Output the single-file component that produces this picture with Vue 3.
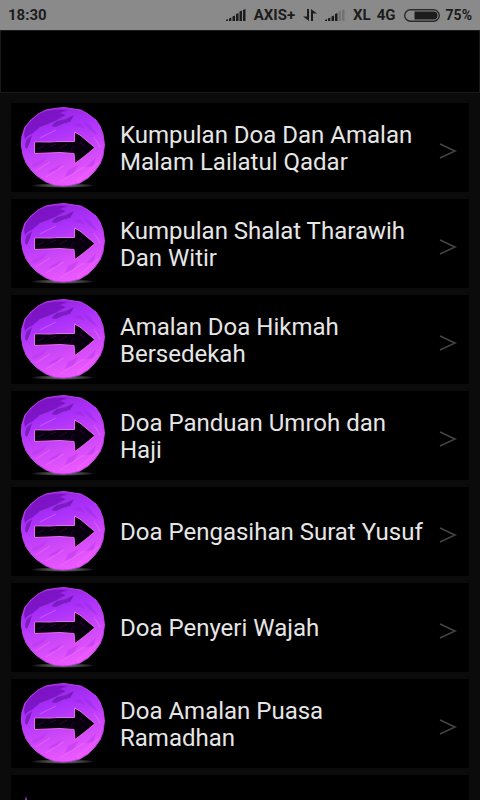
<script setup>
const items = [
  'Kumpulan Doa Dan Amalan Malam Lailatul Qadar',
  'Kumpulan Shalat Tharawih Dan Witir',
  'Amalan Doa Hikmah Bersedekah',
  'Doa Panduan Umroh dan Haji',
  'Doa Pengasihan Surat Yusuf',
  'Doa Penyeri Wajah',
  'Doa Amalan Puasa Ramadhan',
]
</script>

<template>
  <div class="app">
    <div class="status">
      <span class="clock">18:30</span>
      <svg class="signal" viewBox="0 0 20 12" aria-hidden="true">
        <path d="M0 12V11L2 10V12ZM3 12V9.500L5.300 8.500V12ZM6.500 12V7.500L9 6.500V12ZM10 12V5L12.500 4V12ZM13.500 12V2.500L16 1.500V12ZM17 12V1L19.500 0V12Z" />
      </svg>
      <span class="carrier first">AXIS+</span>
      <svg class="data" viewBox="0 0 14 12" aria-hidden="true">
        <path d="M4 0H6V12L0 7.500H4ZM8 12V0L14 4.500H10V12Z" />
      </svg>
      <svg class="signal" viewBox="0 0 20 12" aria-hidden="true">
        <path d="M0 12V11L2 10V12ZM3 12V9.500L5.300 8.500V12ZM6.500 12V7.500L9 6.500V12ZM10 12V5L12.500 4V12Z" />
        <path class="dim" d="M13.500 12V2.500L16 1.500V12ZM17 12V1L19.500 0V12Z" />
      </svg>
      <span class="carrier second">XL</span>
      <span class="carrier network">4G</span>
      <svg class="battery" viewBox="0 0 36 13" aria-hidden="true">
        <rect class="shell" x="0.700" y="0.700" width="34.600" height="11.600" rx="5.800" />
        <path d="M10.500 2.500H29.500A4 4 0 0 1 29.500 10.500H10.500Z" />
      </svg>
      <span class="percent">75%</span>
    </div>

    <header class="bar"></header>

    <svg class="defs" aria-hidden="true">
      <defs>
        <linearGradient id="ball" x1="0.300" y1="0" x2="0.650" y2="1">
          <stop offset="0" stop-color="#9423dc" />
          <stop offset="0.300" stop-color="#aa30fa" />
          <stop offset="0.620" stop-color="#cb46f8" />
          <stop offset="1" stop-color="#f05cff" />
        </linearGradient>
        <radialGradient id="shade">
          <stop offset="0" stop-color="#777" />
          <stop offset="0.600" stop-color="#3c3c3c" />
          <stop offset="1" stop-color="#000" />
        </radialGradient>
        <filter id="brush" x="-10%" y="-10%" width="120%" height="120%">
          <feGaussianBlur stdDeviation="0.700" />
        </filter>
        <symbol id="arrow-ball" viewBox="0 0 88 86">
          <ellipse cx="43" cy="80.500" rx="33" ry="2.500" fill="url(#shade)" />
          <path d="M44 2.500L54 4L61 5L68 9L76 15L80 21L83 29L84.500 40L83 51L80 59L75 66L68 73L60 78L52 80L43 81L34 80L26 77L17 71L11 65L6 58L3 50L1.300 40L2 31L5 22L11 15L18 9L26 5L34 3.500Z" fill="url(#ball)" stroke="#c044ee" stroke-width="0.900" />
          <g filter="url(#brush)">
            <path d="M12 15L19 9L26 6L36 4.500L48 5L40 8L46 10L35 16L28 19L20 22L13 28L8 31L5 34L4 29L6 22Z" fill="#7414bd" opacity="0.800" />
            <path d="M31 21L37 16L46 14L54 10L50 17L42 19L36 22ZM5 42L6 35L12 30L10 37L7 44Z" fill="#7016b4" opacity="0.800" />
            <path d="M62 15L70 20L78 30L69 25ZM52 20L60 18L66 24Z" fill="#9227dc" opacity="0.400" />
            <path d="M11 60L28 51L23 58L14 63ZM26 68L42 58L36 66ZM48 65L58 60L54 68L45 72ZM66 62L76 52L73 61Z" fill="#b338ef" opacity="0.450" />
            <path d="M16 66L30 57M26 72L44 61M40 77L64 62M57 76L78 58M20 33L36 25M74 32L80 42" stroke="#f372ff" stroke-width="1.200" opacity="0.450" fill="none" />
          </g>
          <path d="M14.500 36.800L30 37L38 36.500L54.500 36.500L54.500 27L60 30L66 35L75 42.500L68 48.500L61 54L55 58.500L54 48.500L40 47.500L28 48L14.500 48.500Z" fill="#09000f" stroke="#e868ee" stroke-width="1" />
          <path d="M18 44L24 41M31 41L36 39M40 43L47 39M51 44L55 41M60 37L64 41" stroke="#2b0838" stroke-width="1" fill="none" />
        </symbol>
      </defs>
    </svg>

    <nav class="list">
      <a v-for="item in items" :key="item" class="row" href="#">
        <svg class="icon" aria-hidden="true"><use href="#arrow-ball" /></svg>
        <span class="title">{{ item }}</span>
        <svg class="chevron" viewBox="0 0 18 16" aria-hidden="true"><path d="M1 1L16 8L1 15" /></svg>
      </a>
      <div class="row last">
        <svg class="icon" viewBox="0 0 88 86" aria-hidden="true">
          <path d="M6 19L8 27L13 31L8 34L6 42L4 34L0 31L4 27Z" fill="#a83bc8" />
        </svg>
      </div>
    </nav>
  </div>
</template>

<style>
body {
  background: #0b0b0b;
  overflow: hidden;
}
</style>

<style scoped>
.app {
  height: 100vh;
  overflow: hidden;
  display: flex;
  flex-direction: column;
  background: #0b0b0b;
  font-family: Roboto, sans-serif;
}
.status {
  flex: none;
  box-sizing: border-box;
  height: 30px;
  padding: 0 8px;
  display: flex;
  align-items: center;
  background: #8a8a8a;
  color: #1c1c1c;
  fill: #1c1c1c;
  font-size: 15px;
  font-weight: 700;
  line-height: 20px;
}
.clock {
  margin-right: auto;
}
.signal {
  width: 20px;
  height: 12px;
}
.dim {
  fill: #737373;
}
.carrier.first {
  margin: 0 8px;
}
.data {
  width: 14px;
  height: 12px;
  margin-right: 8px;
}
.carrier.second {
  margin: 0 6px 0 8px;
}
.battery {
  width: 36px;
  height: 13px;
  margin: 0 6px 0 8px;
}
.shell {
  fill: none;
  stroke: #2a2a2a;
  stroke-width: 1.4;
}
.percent {
  font-size: 14px;
}
.bar {
  flex: none;
  box-sizing: border-box;
  height: 63px;
  background: #000;
  border: 1px solid #1a1a1a;
}
.defs {
  position: absolute;
  width: 0;
  height: 0;
}
.list {
  display: flex;
  flex-direction: column;
  gap: 7px;
  padding: 10px 11px 0;
}
.row {
  flex: none;
  box-sizing: border-box;
  height: 89px;
  padding: 0 12px 0 9px;
  display: flex;
  align-items: center;
  background: #000;
  color: #e6e6e6;
  text-decoration: none;
}
.icon {
  flex: none;
  width: 88px;
  height: 86px;
}
.title {
  flex: 1;
  margin: 0 8px 0 12px;
  padding-top: 2px;
  font-size: 24px;
  line-height: 27px;
}
.chevron {
  flex: none;
  width: 18px;
  height: 16px;
  margin-top: 6px;
  fill: none;
  stroke: #444;
  stroke-width: 1.5;
}
</style>
